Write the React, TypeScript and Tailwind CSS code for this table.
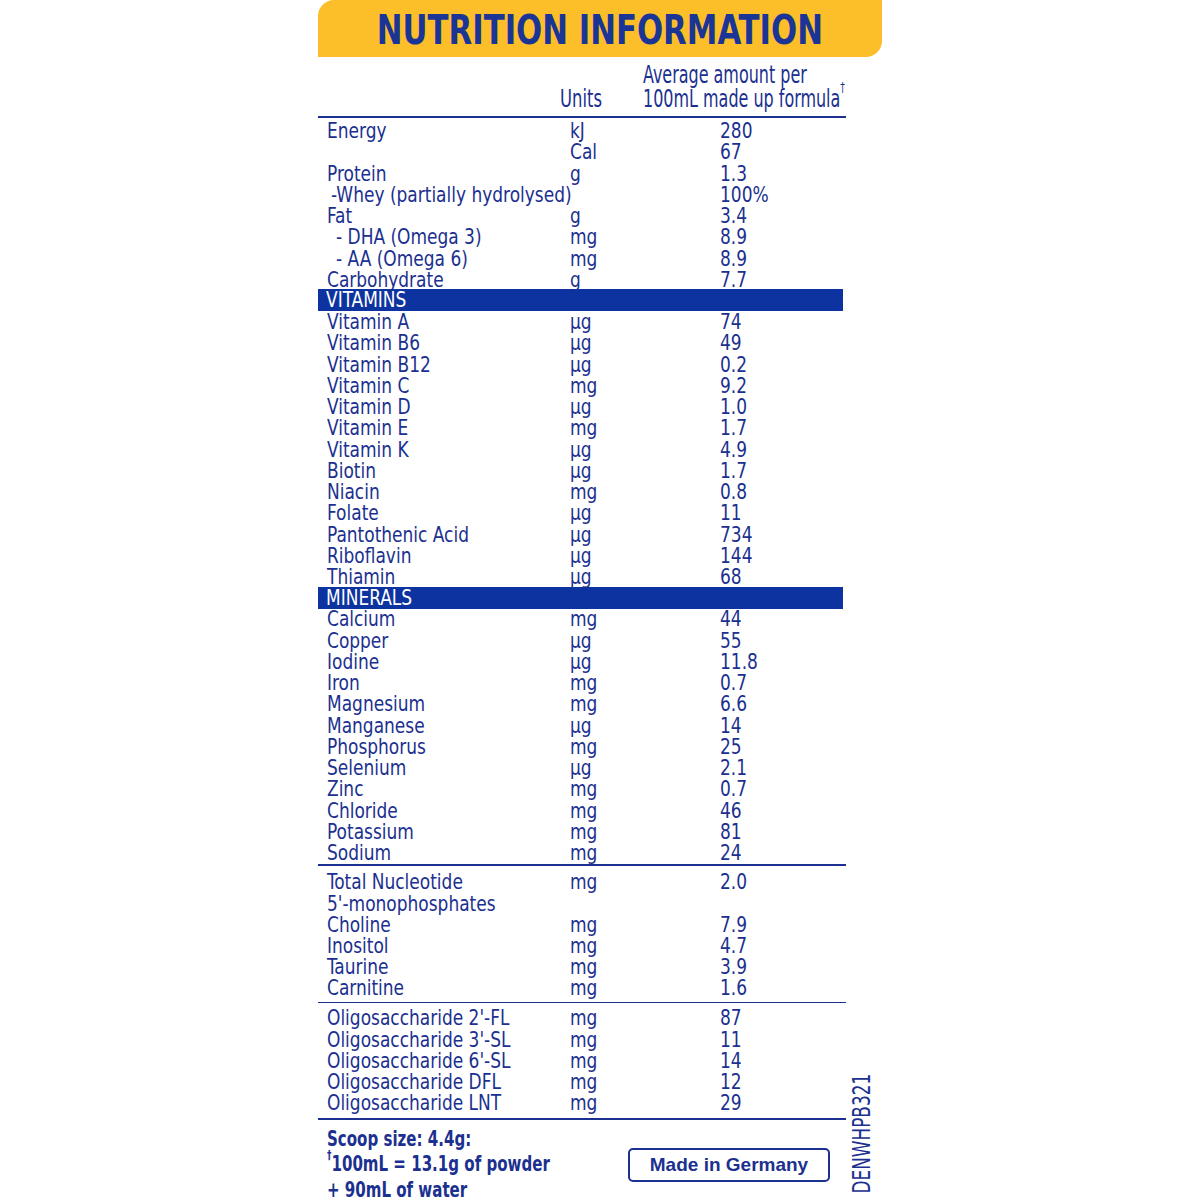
import React from "react";

const FONT = "font-['DejaVu_Sans_Condensed','DejaVu_Sans',sans-serif]";

type Row = [string, string, string, number?];

const top: Row[] = [
  ["Energy", "kJ", "280"],
  ["", "Cal", "67"],
  ["Protein", "g", "1.3"],
  ["-Whey (partially hydrolysed)", "", "100%", 4],
  ["Fat", "g", "3.4"],
  ["- DHA (Omega 3)", "mg", "8.9", 9],
  ["- AA (Omega 6)", "mg", "8.9", 9],
  ["Carbohydrate", "g", "7.7"],
];

const vitamins: Row[] = [
  ["Vitamin A", "µg", "74"],
  ["Vitamin B6", "µg", "49"],
  ["Vitamin B12", "µg", "0.2"],
  ["Vitamin C", "mg", "9.2"],
  ["Vitamin D", "µg", "1.0"],
  ["Vitamin E", "mg", "1.7"],
  ["Vitamin K", "µg", "4.9"],
  ["Biotin", "µg", "1.7"],
  ["Niacin", "mg", "0.8"],
  ["Folate", "µg", "11"],
  ["Pantothenic Acid", "µg", "734"],
  ["Riboflavin", "µg", "144"],
  ["Thiamin", "µg", "68"],
];

const minerals: Row[] = [
  ["Calcium", "mg", "44"],
  ["Copper", "µg", "55"],
  ["Iodine", "µg", "11.8"],
  ["Iron", "mg", "0.7"],
  ["Magnesium", "mg", "6.6"],
  ["Manganese", "µg", "14"],
  ["Phosphorus", "mg", "25"],
  ["Selenium", "µg", "2.1"],
  ["Zinc", "mg", "0.7"],
  ["Chloride", "mg", "46"],
  ["Potassium", "mg", "81"],
  ["Sodium", "mg", "24"],
];

const others: Row[] = [
  ["Total Nucleotide", "mg", "2.0"],
  ["5'-monophosphates", "", ""],
  ["Choline", "mg", "7.9"],
  ["Inositol", "mg", "4.7"],
  ["Taurine", "mg", "3.9"],
  ["Carnitine", "mg", "1.6"],
];

const oligos: Row[] = [
  ["Oligosaccharide 2'-FL", "mg", "87"],
  ["Oligosaccharide 3'-SL", "mg", "11"],
  ["Oligosaccharide 6'-SL", "mg", "14"],
  ["Oligosaccharide DFL", "mg", "12"],
  ["Oligosaccharide LNT", "mg", "29"],
];

function N({ children }: { children: React.ReactNode }) {
  return <span className="inline-block origin-left scale-x-[0.9] whitespace-nowrap">{children}</span>;
}

function Rows({ rows }: { rows: Row[] }) {
  return (
    <div className="flex flex-col">
      {rows.map(([label, unit, value, indent], i) => (
        <div
          key={i}
          className="grid grid-cols-[243px_150px_1fr] h-[21.24px] shrink-0 leading-[21.24px] pl-[9px] text-[21px]"
        >
          <div style={{ paddingLeft: indent ?? 0 }}>{label && <N>{label}</N>}</div>
          <div>{unit && <N>{unit}</N>}</div>
          <div>{value && <N>{value}</N>}</div>
        </div>
      ))}
    </div>
  );
}

function Bar({ title }: { title: string }) {
  return (
    <div className="h-[22px] -mt-[1.5px] mb-[0.74px] shrink-0 leading-[22px] bg-[#0c33a0] text-white text-[21px] pl-[8px] mr-[3px]">
      <N>{title}</N>
    </div>
  );
}

function Line({ className = "" }: { className?: string }) {
  return <div className={`h-[1.5px] shrink-0 bg-[#1b308f] ${className}`} />;
}

export default function App() {
  return (
    <div className={`w-[1200px] h-[1200px] bg-white overflow-hidden text-[#1b308f] ${FONT}`}>
      <div className="ml-[318px] w-[564px] flex flex-col">
        <div className="h-[57px] shrink-0 bg-[#fcbf2a] rounded-tl-[16px] rounded-br-[16px] flex items-center justify-center">
          <span className="inline-block scale-x-[0.855] text-[40px] font-bold text-[#1a3596] leading-none pt-[2px] whitespace-nowrap">
            NUTRITION INFORMATION
          </span>
        </div>
        <div className="flex">
          <div className="w-[528px] shrink-0 flex flex-col">
            <div className="h-[59px] shrink-0 grid grid-cols-[242px_83px_1fr] items-end text-[24px] pb-[5px] leading-[24px] whitespace-nowrap">
              <div />
              <div>
                <span className="inline-block origin-left scale-x-[0.76]">Units</span>
              </div>
              <div>
                <span className="inline-block origin-left scale-x-[0.74]">Average amount per</span>
                <br />
                <span className="inline-block origin-left scale-x-[0.74]">
                  100mL made up formula<sup className="text-[14px] align-[8px]">†</sup>
                </span>
              </div>
            </div>
            <Line />
            <div className="pt-[3.6px]">
              <Rows rows={top} />
              <Bar title="VITAMINS" />
              <Rows rows={vitamins} />
              <Bar title="MINERALS" />
              <Rows rows={minerals} />
            </div>
            <Line />
            <div className="pt-[6.5px]">
              <Rows rows={others} />
            </div>
            <Line className="mt-[2.1px]" />
            <div className="pt-[5px]">
              <Rows rows={oligos} />
            </div>
            <Line className="mt-[4px]" />
            <div className="flex">
              <div className="w-[310px] pl-[9px] pt-[6px] font-bold text-[22px] leading-[25.5px] whitespace-nowrap">
                <div>
                  <span className="inline-block origin-left scale-x-[0.76]">Scoop size: 4.4g:</span>
                </div>
                <div>
                  <span className="inline-block origin-left scale-x-[0.76]">
                    <sup className="text-[13px] align-[6px]">†</sup>100mL = 13.1g of powder
                  </span>
                </div>
                <div>
                  <span className="inline-block origin-left scale-x-[0.76]">+ 90mL of water</span>
                </div>
              </div>
              <div className="mt-[28.5px] w-[202px] h-[34px] border-2 border-[#1b308f] rounded-[5px] flex items-center justify-center font-['Liberation_Sans',Arial,sans-serif] font-bold text-[19px]">
                Made in Germany
              </div>
            </div>
          </div>
          <div className="flex-1 flex flex-col justify-end pb-[9px] pl-[4px]">
            <div className="scale-y-[0.75] origin-bottom">
              <div className="[writing-mode:vertical-rl] rotate-180 text-[25px] leading-[24px] whitespace-nowrap">
                DENWHPB321
              </div>
            </div>
          </div>
        </div>
      </div>
    </div>
  );
}
